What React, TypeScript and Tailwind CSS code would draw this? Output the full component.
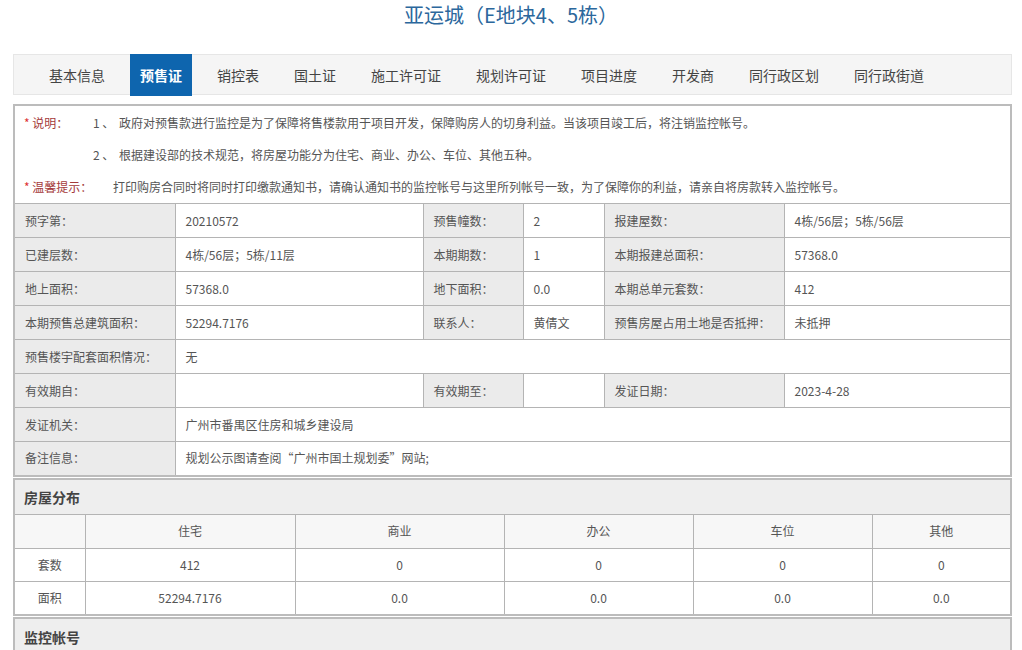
const tabs = [
  "基本信息",
  "预售证",
  "销控表",
  "国土证",
  "施工许可证",
  "规划许可证",
  "项目进度",
  "开发商",
  "同行政区划",
  "同行政街道",
];

const lbl = "bg-[#ebebeb] border border-[#b4b4b4] pl-[10px] py-0 text-left font-normal";
const val = "bg-white border border-[#b4b4b4] pl-[10px] py-0 text-left";

const distHead = ["", "住宅", "商业", "办公", "车位", "其他"];
const distRows = [
  ["套数", "412", "0", "0", "0", "0"],
  ["面积", "52294.7176", "0.0", "0.0", "0.0", "0.0"],
];

function App() {
  return (
    <div
      className="min-h-screen bg-white text-[#555] text-[12px] leading-[16px]"
      style={{ fontFamily: '"Noto Sans CJK SC", "Noto Sans", sans-serif' }}
    >
      {/* title */}
      <h1 className="pt-[3px] text-center text-[20px] leading-[24px] text-[#2b679c]">
        亚运城（E地块4、5栋）
      </h1>

      {/* tabs */}
      <div className="ml-[13px] mr-[10px] mt-[27px] h-[41px] bg-[#f5f5f5] border border-[#e6e6e6] flex items-start pl-[25px] gap-[15px]">
        {tabs.map((t) => (
          <div
            key={t}
            className={
              t === "预售证"
                ? "h-[42px] -mt-px px-[10px] flex items-center bg-[#0e65ae] text-white font-bold text-[14px]"
                : "h-[40px] px-[10px] flex items-center text-[14px] text-[#444]"
            }
          >
            {t}
          </div>
        ))}
      </div>

      <div className="ml-[13px] mr-[10px] mt-[9px]">
        {/* notice + info */}
        <div className="border-2 border-[#bcbcbc]">
          <div className="pt-[1px] pl-[9px]">
            <div className="h-[32px] flex items-center">
              <span className="w-[69px]">
                <span className="text-[#d33]">* </span>
                <span className="text-[#a43a3a]">说明：</span>
              </span>
              <span className="w-[26px]">1 、</span>
              <span>政府对预售款进行监控是为了保障将售楼款用于项目开发，保障购房人的切身利益。当该项目竣工后，将注销监控帐号。</span>
            </div>
            <div className="h-[32px] flex items-center pl-[69px]">
              <span className="w-[26px]">2 、</span>
              <span>根据建设部的技术规范，将房屋功能分为住宅、商业、办公、车位、其他五种。</span>
            </div>
            <div className="h-[32px] flex items-center">
              <span className="w-[89px]">
                <span className="text-[#d33]">* </span>
                <span className="text-[#a43a3a]">温馨提示：</span>
              </span>
              <span>打印购房合同时将同时打印缴款通知书，请确认通知书的监控帐号与这里所列帐号一致，为了保障你的利益，请亲自将房款转入监控帐号。</span>
            </div>
          </div>

          <table className="w-full border-collapse table-fixed">
            <colgroup>
              <col className="w-[160px]" />
              <col className="w-[248px]" />
              <col className="w-[100px]" />
              <col className="w-[81px]" />
              <col className="w-[180px]" />
              <col />
            </colgroup>
            <tbody>
              <tr className="h-[34px]">
                <th className={lbl + " border-l-0"}>预字第：</th>
                <td className={val}>20210572</td>
                <th className={lbl}>预售幢数：</th>
                <td className={val}>2</td>
                <th className={lbl}>报建屋数：</th>
                <td className={val + " border-r-0"}>4栋/56层；5栋/56层</td>
              </tr>
              <tr className="h-[34px]">
                <th className={lbl + " border-l-0"}>已建层数：</th>
                <td className={val}>4栋/56层；5栋/11层</td>
                <th className={lbl}>本期期数：</th>
                <td className={val}>1</td>
                <th className={lbl}>本期报建总面积：</th>
                <td className={val + " border-r-0"}>57368.0</td>
              </tr>
              <tr className="h-[34px]">
                <th className={lbl + " border-l-0"}>地上面积：</th>
                <td className={val}>57368.0</td>
                <th className={lbl}>地下面积：</th>
                <td className={val}>0.0</td>
                <th className={lbl}>本期总单元套数：</th>
                <td className={val + " border-r-0"}>412</td>
              </tr>
              <tr className="h-[34px]">
                <th className={lbl + " border-l-0"}>本期预售总建筑面积：</th>
                <td className={val}>52294.7176</td>
                <th className={lbl}>联系人：</th>
                <td className={val}>黄倩文</td>
                <th className={lbl}>预售房屋占用土地是否抵押：</th>
                <td className={val + " border-r-0"}>未抵押</td>
              </tr>
              <tr className="h-[34px]">
                <th className={lbl + " border-l-0"}>预售楼宇配套面积情况：</th>
                <td className={val + " border-r-0"} colSpan={5}>无</td>
              </tr>
              <tr className="h-[34px]">
                <th className={lbl + " border-l-0"}>有效期自：</th>
                <td className={val}></td>
                <th className={lbl}>有效期至：</th>
                <td className={val}></td>
                <th className={lbl}>发证日期：</th>
                <td className={val + " border-r-0"}>2023-4-28</td>
              </tr>
              <tr className="h-[34px]">
                <th className={lbl + " border-l-0"}>发证机关：</th>
                <td className={val + " border-r-0"} colSpan={5}>广州市番禺区住房和城乡建设局</td>
              </tr>
              <tr className="h-[33px]">
                <th className={lbl + " border-l-0 border-b-0"}>备注信息：</th>
                <td className={val + " border-r-0 border-b-0"} colSpan={5}>规划公示图请查阅“广州市国土规划委”网站;</td>
              </tr>
            </tbody>
          </table>
        </div>

        {/* distribution */}
        <div className="border-2 border-[#bcbcbc] mt-px">
          <div className="h-[34px] bg-[#eeeeee] flex items-center pl-[9px] font-bold text-[14px] text-[#444]">
            房屋分布
          </div>
          <table className="w-full border-collapse table-fixed">
            <colgroup>
              <col className="w-[70px]" />
              <col className="w-[210px]" />
              <col className="w-[209px]" />
              <col className="w-[189px]" />
              <col className="w-[179px]" />
              <col />
            </colgroup>
            <thead>
              <tr className="h-[34px] bg-[#f7f7f7]">
                {distHead.map((h, i) => (
                  <th
                    key={i}
                    className={
                      "border border-[#b4b4b4] font-normal text-center py-0" +
                      (i === 0 ? " border-l-0" : "") +
                      (i === 5 ? " border-r-0" : "")
                    }
                  >
                    {h}
                  </th>
                ))}
              </tr>
            </thead>
            <tbody>
              {distRows.map((r, ri) => (
                <tr key={ri} className="h-[33px] bg-white">
                  {r.map((c, i) => (
                    <td
                      key={i}
                      className={
                        "border border-[#b4b4b4] text-center py-0" +
                        (i === 0 ? " border-l-0" : "") +
                        (i === 5 ? " border-r-0" : "") +
                        (ri === 1 ? " border-b-0" : "")
                      }
                    >
                      {c}
                    </td>
                  ))}
                </tr>
              ))}
            </tbody>
          </table>
        </div>

        {/* account */}
        <div className="border-2 border-b-0 border-[#bcbcbc] mt-px">
          <div className="h-[36px] bg-[#eeeeee] flex items-center pl-[9px] font-bold text-[14px] text-[#444]">
            监控帐号
          </div>
        </div>
      </div>
    </div>
  );
}

export default App;
